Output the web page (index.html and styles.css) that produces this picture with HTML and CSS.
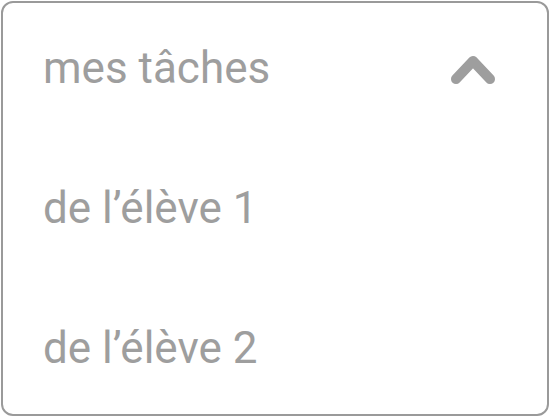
FILE: index.html
```html
<!DOCTYPE html>
<html lang="fr">
<head>
<meta charset="utf-8">
<link rel="stylesheet" href="styles.css">
</head>
<body>
<div class="menu">
  <div class="row header">
    <span class="label">mes tâches</span>
    <svg class="chevron" width="48" height="34" viewBox="0 0 48 34" aria-hidden="true">
      <polyline points="7,28 24,10 41,28" fill="none" stroke="#9e9e9e" stroke-width="10" stroke-linecap="round" stroke-linejoin="round"/>
    </svg>
  </div>
  <div class="row"><span class="label">de l’élève 1</span></div>
  <div class="row"><span class="label">de l’élève 2</span></div>
</div>
</body>
</html>
```
FILE: styles.css
```css
html, body {
  margin: 0;
  padding: 0;
  background: #ffffff;
}
.menu {
  box-sizing: border-box;
  margin: 1px;
  width: 548px;
  height: 415px;
  border: 2px solid #9a9a9a;
  border-radius: 12px;
  padding: 39px 50px 0 40px;
  display: flex;
  flex-direction: column;
  gap: 88px;
  font-family: Roboto, "Liberation Sans", sans-serif;
  color: #9e9e9e;
}
.row {
  display: flex;
  align-items: center;
  justify-content: space-between;
  height: 52px;
}
.label {
  font-size: 44px;
  line-height: 52px;
}
.chevron {
  display: block;
}
```
